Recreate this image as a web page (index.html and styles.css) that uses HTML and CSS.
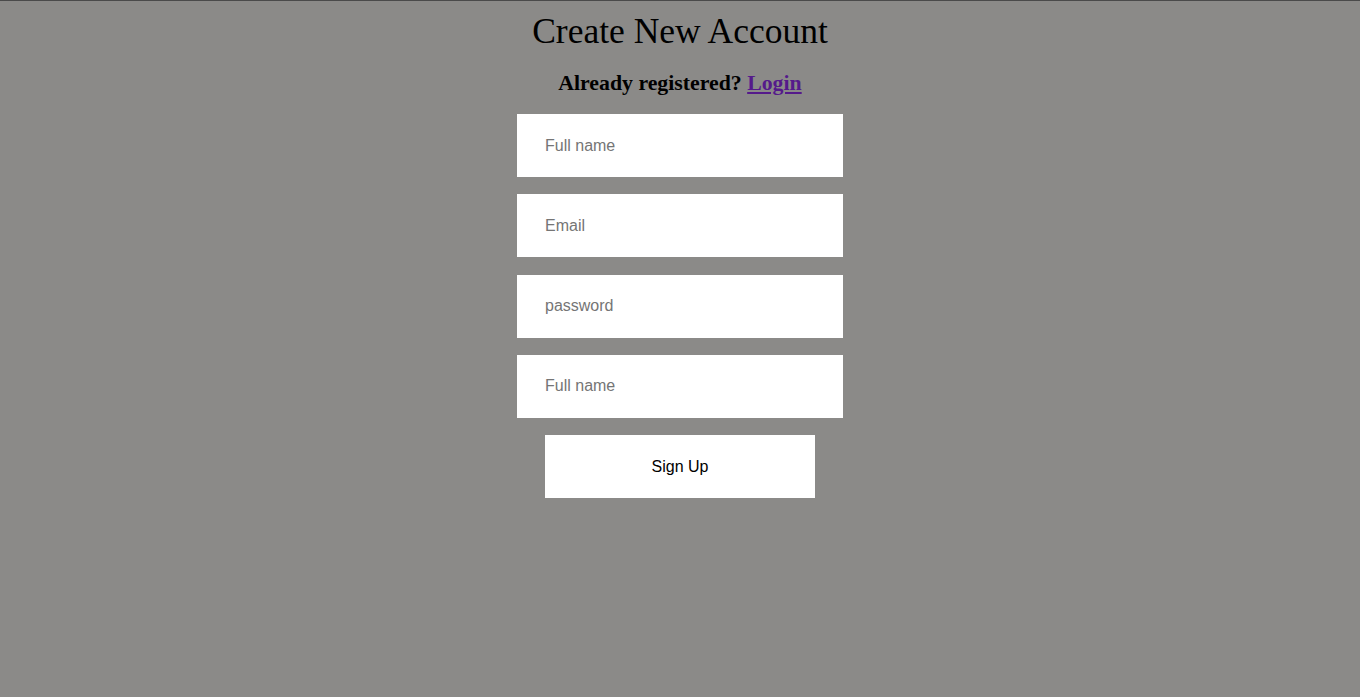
FILE: index.html
```html
<!DOCTYPE html>
<html lang="en">
<head>
    <meta charset="UTF-8">
    <meta name="viewport" content="width=device-width, initial-scale=1.0">
    <title>Create New Account</title>
    <link rel="stylesheet" href="styles.css">
</head>
<body>
    <div class="container">
        <h1 class="title">Create New Account</h1>
        <h3 class="subtitle">Already registered? <a href="#">Login</a></h3>

        <form class="form">
            <input type="text" class="field" placeholder="Full name">
            <input type="email" class="field" placeholder="Email">
            <input type="password" class="field" placeholder="password">
            <input type="text" class="field" placeholder="Full name">
            <button type="button" class="button">Sign Up</button>
        </form>
    </div>
</body>
</html>
```

FILE: styles.css
```css
* {
    box-sizing: border-box;
}

body {
    margin: 0;
    min-height: 100vh;
    background: #8b8a88;
    border-top: 1px solid #4a4a4a;
    font-family: "Liberation Serif", "Times New Roman", serif;
}

.container {
    display: flex;
    flex-direction: column;
    align-items: center;
}

.title {
    font-size: 35.5px;
    font-weight: normal;
    color: #000;
    margin: 9px 0 0;
}

.subtitle {
    font-size: 21.8px;
    font-weight: bold;
    color: #000;
    margin: 19px 0 0;
}

.subtitle a {
    color: #551a8b;
}

.form {
    display: flex;
    flex-direction: column;
    align-items: center;
    gap: 17.3px;
    margin-top: 18px;
}

.field {
    width: 326px;
    height: 63px;
    border: none;
    outline: none;
    background: #fff;
    padding: 0 28px;
    font-family: "Liberation Sans", Arial, sans-serif;
    font-size: 16px;
    color: #000;
}

.field::placeholder {
    color: #757575;
}

.button {
    width: 270px;
    height: 63px;
    border: none;
    background: #fff;
    font-family: "Liberation Sans", Arial, sans-serif;
    font-size: 16px;
    color: #000;
    cursor: pointer;
}
```
